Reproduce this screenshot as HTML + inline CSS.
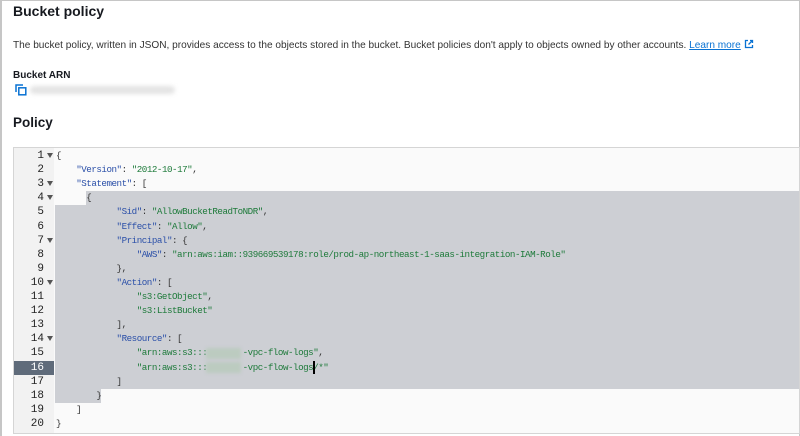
<!DOCTYPE html>
<html><head><style>
*{margin:0;padding:0;box-sizing:border-box}
body{width:800px;height:436px;background:#fff;position:relative;overflow:hidden;font-family:"Liberation Sans",sans-serif;color:#16191f}
.frame{position:absolute;left:0;top:0;width:800px;height:436px;border-left:2px solid #c6c6c6;border-top:1px solid #c6c6c6;border-right:1px solid #c6c6c6}
.h1{position:absolute;left:13px;top:3px;font-size:14px;font-weight:bold}
.desc{position:absolute;left:13px;top:39px;font-size:10.1px;color:#333;white-space:nowrap}
.desc a{color:#0972d3;text-decoration:underline}
.arn{position:absolute;left:13px;top:70px;font-size:10px;font-weight:bold}
.blur{position:absolute;left:30px;top:86px;width:145px;height:8px;background:#e4e4e4;filter:blur(2px);border-radius:4px}
.h2{position:absolute;left:13px;top:115px;font-size:13.5px;font-weight:bold}
.ed{position:absolute;left:13px;top:147px;width:787px;height:287px;border:1px solid #d5d5d5;background:#fafafa}
.gut{position:absolute;left:14px;top:148px;width:40px;height:285px;background:#f2f2f2}
.ln{position:absolute;left:14px;width:40px;height:14.1px;font-family:"Liberation Mono",monospace;font-size:11px;line-height:14.1px;color:#222}
.ln span{position:absolute;right:10px}
.ln i{position:absolute;right:1px;top:4px;width:0;height:0;border-left:3px solid transparent;border-right:3px solid transparent;border-top:5px solid #555}
.ln.act{background:#5f6b7a;color:#fff}
.c{position:absolute;left:56px;height:14.1px;font-family:"Liberation Mono",monospace;font-size:9.2px;letter-spacing:-0.47px;line-height:14.1px;white-space:pre;color:#333}
.k{color:#2a4fa8}.s{color:#1d7a3a}
.sel{position:absolute;background:#cdcfd4}
.bl{position:absolute;width:35px;height:11px;background:#bccbc0;filter:blur(1.5px)}
</style></head><body>
<div class="frame"></div>
<div class="h1">Bucket policy</div>
<div class="desc">The bucket policy, written in JSON, provides access to the objects stored in the bucket. Bucket policies don't apply to objects owned by other accounts. <a>Learn more</a> <svg width="10" height="10" viewBox="0 0 10 10" style="vertical-align:-1px"><path d="M4 1.5H1.5v7h7V6M6 1.5h2.5V4M8.5 1.5L4.5 5.5" fill="none" stroke="#0972d3" stroke-width="1.3"/></svg></div>
<div class="arn">Bucket ARN</div>
<svg style="position:absolute;left:15px;top:84px" width="12" height="12" viewBox="0 0 12 12"><path d="M1 8V1h7" fill="none" stroke="#0972d3" stroke-width="1.5"/><rect x="3.8" y="3.8" width="7" height="7" fill="none" stroke="#0972d3" stroke-width="1.5"/></svg>
<div class="blur"></div>
<div class="h2">Policy</div>
<div class="ed"></div>
<div class="gut"></div>
<div class="sel" style="left:86px;top:191px;width:713px;height:14.2px"></div>
<div class="sel" style="left:55px;top:205px;width:744px;height:184px"></div>
<div class="sel" style="left:55px;top:389px;width:46px;height:14.2px"></div>
<div class="ln" style="top:149px"><span>1</span><i></i></div>
<div class="ln" style="top:163.1px"><span>2</span></div>
<div class="ln" style="top:177.2px"><span>3</span><i></i></div>
<div class="ln" style="top:191.3px"><span>4</span><i></i></div>
<div class="ln" style="top:205.4px"><span>5</span></div>
<div class="ln" style="top:219.5px"><span>6</span></div>
<div class="ln" style="top:233.6px"><span>7</span><i></i></div>
<div class="ln" style="top:247.7px"><span>8</span></div>
<div class="ln" style="top:261.8px"><span>9</span></div>
<div class="ln" style="top:275.9px"><span>10</span><i></i></div>
<div class="ln" style="top:290px"><span>11</span></div>
<div class="ln" style="top:304.1px"><span>12</span></div>
<div class="ln" style="top:318.2px"><span>13</span></div>
<div class="ln" style="top:332.3px"><span>14</span><i></i></div>
<div class="ln" style="top:346.4px"><span>15</span></div>
<div class="ln act" style="top:360.5px"><span>16</span></div>
<div class="ln" style="top:374.6px"><span>17</span></div>
<div class="ln" style="top:388.7px"><span>18</span></div>
<div class="ln" style="top:402.8px"><span>19</span></div>
<div class="ln" style="top:416.9px"><span>20</span></div>
<div class="c" style="top:149px">{</div>
<div class="c" style="top:163.1px">    <span class="k">"Version"</span>: <span class="s">"2012-10-17"</span>,</div>
<div class="c" style="top:177.2px">    <span class="k">"Statement"</span>: [</div>
<div class="c" style="top:191.3px">      {</div>
<div class="c" style="top:205.4px">            <span class="k">"Sid"</span>: <span class="s">"AllowBucketReadToNDR"</span>,</div>
<div class="c" style="top:219.5px">            <span class="k">"Effect"</span>: <span class="s">"Allow"</span>,</div>
<div class="c" style="top:233.6px">            <span class="k">"Principal"</span>: {</div>
<div class="c" style="top:247.7px">                <span class="k">"AWS"</span>: <span class="s">"arn:aws:iam::939669539178:role/prod-ap-northeast-1-saas-integration-IAM-Role"</span></div>
<div class="c" style="top:261.8px">            },</div>
<div class="c" style="top:275.9px">            <span class="k">"Action"</span>: [</div>
<div class="c" style="top:290px">                <span class="s">"s3:GetObject"</span>,</div>
<div class="c" style="top:304.1px">                <span class="s">"s3:ListBucket"</span></div>
<div class="c" style="top:318.2px">            ],</div>
<div class="c" style="top:332.3px">            <span class="k">"Resource"</span>: [</div>
<div class="c" style="top:346.4px">                <span class="s">"arn:aws:s3:::       -vpc-flow-logs"</span>,</div>
<div class="c" style="top:360.5px">                <span class="s">"arn:aws:s3:::       -vpc-flow-logs/*"</span></div>
<div class="c" style="top:374.6px">            ]</div>
<div class="c" style="top:388.7px">        }</div>
<div class="c" style="top:402.8px">    ]</div>
<div class="c" style="top:416.9px">}</div>
<div class="bl" style="left:206px;top:348px"></div>
<div class="bl" style="left:206px;top:362px"></div>
<div style="position:absolute;left:313px;top:361px;width:1.5px;height:13px;background:#000"></div>
</body></html>
